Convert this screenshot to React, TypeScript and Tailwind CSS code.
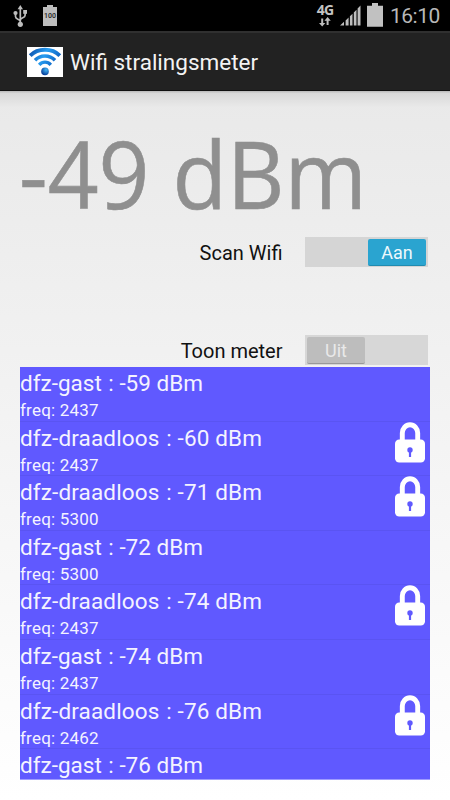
import React from "react";

type Network = { name: string; level: number; freq?: number; locked: boolean };

const networks: Network[] = [
  { name: "dfz-gast", level: -59, freq: 2437, locked: false },
  { name: "dfz-draadloos", level: -60, freq: 2437, locked: true },
  { name: "dfz-draadloos", level: -71, freq: 5300, locked: true },
  { name: "dfz-gast", level: -72, freq: 5300, locked: false },
  { name: "dfz-draadloos", level: -74, freq: 2437, locked: true },
  { name: "dfz-gast", level: -74, freq: 2437, locked: false },
  { name: "dfz-draadloos", level: -76, freq: 2462, locked: true },
  { name: "dfz-gast", level: -76, locked: false },
];

function UsbIcon() {
  return (
    <svg className="ml-[13px] mt-[1px] h-[23px] w-[15px]" viewBox="0 0 15 23" fill="none" stroke="#bdbdbd" strokeWidth="1.7">
      <path d="M7.3 3v17M7.3 16.6C6.8 13.8 2.5 14.6 2.5 11.5V8M7.3 15.2c.5-2.8 4.8-2 4.8-5V7" />
      <path d="M7.3 0l2.7 4.3H4.6z" fill="#bdbdbd" stroke="none" />
      <circle cx="7.3" cy="19.3" r="2.6" fill="#bdbdbd" stroke="none" />
      <circle cx="2.5" cy="8" r="2.1" fill="#bdbdbd" stroke="none" />
      <path d="M10.2 5h3.8v3.8h-3.8z" fill="#bdbdbd" stroke="none" />
    </svg>
  );
}

function StatusBar() {
  return (
    <div className="flex h-[31px] items-start bg-black pt-[4px]">
      <UsbIcon />
      <div className="ml-[15px] mt-[1px] flex w-[14px] flex-col items-center">
        <div className="h-[2px] w-[6px] bg-[#bdbdbd]" />
        <div className="flex h-[19px] w-[14px] items-center justify-center bg-[#bdbdbd] text-[7px] font-medium leading-none text-[#222]">
          100
        </div>
      </div>
      <div className="ml-auto flex w-[20px] flex-col items-center">
        <span className="font-['Open_Sans',sans-serif] text-[14px] font-bold leading-[12px] tracking-[-0.7px] text-[#c4c4c4]">4G</span>
        <svg className="mt-[1px] h-[10px] w-[12px]" viewBox="0 0 12 10" fill="#bdbdbd">
          <path d="M2.2 1.5h2V6h2.1L3.2 9.5 0 6h2.2zM7.6 8V3.8H5.4L8.6 0l3.2 3.8H9.6V8z" />
        </svg>
      </div>
      <svg className="ml-[5px] mt-[1px] h-[21px] w-[21px]" viewBox="0 0 21 21" fill="#bdbdbd">
        <path d="M0 20.5L4 16.7v3.8zM5.6 15.4l3-2.8v7.9h-3zM9.9 11.3l2.6-2.6v11.8H9.9zM13.8 7.4l2.7-2.7v15.8h-2.7zM17.6 3.5L20.5.6v19.9h-2.9z" />
      </svg>
      <svg className="-mt-px ml-[6px] h-[24px] w-[16px]" viewBox="0 0 16 24" fill="#c1c1c1">
        <path d="M5 0h6v2.7h5v21H0v-21h5z" />
      </svg>
      <span className="ml-[7px] w-[60px] whitespace-nowrap text-[21px] leading-[24px] tracking-[-0.5px] text-[#b8b8b8]">16:10</span>
    </div>
  );
}

function WifiLogo() {
  return (
    <svg className="h-[30px] w-[36px]" viewBox="0 0 36 30" fill="none">
      <defs>
        <linearGradient id="wave" x1="3" y1="2" x2="32" y2="20" gradientUnits="userSpaceOnUse">
          <stop offset="0" stopColor="#0b4fa9" />
          <stop offset=".45" stopColor="#269cf0" />
          <stop offset="1" stopColor="#0751b5" />
        </linearGradient>
        <radialGradient id="dot" cx=".65" cy=".3" r=".7">
          <stop offset="0" stopColor="#42b6f5" />
          <stop offset="1" stopColor="#063e9a" />
        </radialGradient>
      </defs>
      <path d="M0 0h36v30H0z" fill="#fff" />
      <g stroke="url(#wave)">
        <path d="M3.2 8.6C11 .8 25 .8 32.8 8.6" strokeWidth="3.9" />
        <path d="M8 13.2c5.6-5.6 14.4-5.6 20 0" strokeWidth="3.6" />
        <path d="M12.2 17.8c3.2-3.6 8.4-3.6 11.6 0" strokeWidth="3.3" />
      </g>
      <circle cx="18" cy="24.4" r="3.8" fill="url(#dot)" />
    </svg>
  );
}

function Lock() {
  return (
    <svg className="mr-[5px] h-[42px] w-[30px]" viewBox="0 0 30 42" fill="none">
      <path d="M7.3 20V11a7.7 8.2 0 0 1 15.4 0V20" stroke="#fff" strokeWidth="4.9" />
      <rect y="17.6" width="30" height="23" rx="4.2" fill="#fff" />
      <circle cx="15" cy="28" r="2.7" fill="#6059ff" />
      <path d="M13.9 28h2.2v7h-2.2z" fill="#6059ff" />
    </svg>
  );
}

export default function App() {
  return (
    <div className="flex h-[800px] w-[450px] flex-col overflow-hidden bg-white font-['Roboto',sans-serif]">
      <StatusBar />
      <header className="flex h-[60px] items-center border-b border-t-2 border-b-[#111] border-t-[#303030] bg-[#222] pl-[27px] pt-px">
        <WifiLogo />
        <h1 className="ml-[7px] whitespace-nowrap text-[22.5px] leading-[30px] text-[#f3f3f3]">Wifi stralingsmeter</h1>
      </header>
      <main className="flex flex-1 flex-col bg-linear-to-b from-[#e9e9e9] to-white px-[20px]">
        <div className="-mx-[20px] h-[16px] shrink-0 bg-linear-to-b from-[#b8b8b8] via-[#d9d9d9] via-15% to-[#e9e9e9]" />
        <div className="-ml-px mt-[4px] h-[125px] origin-left scale-x-[0.957] whitespace-nowrap font-['Open_Sans',sans-serif] text-[93px] leading-[125px] text-[#8f8f8f] [-webkit-text-stroke:0.6px_#8f8f8f]">-49 dBm</div>
        <div className="mt-px flex h-[30px] items-center justify-end pr-[2px]">
          <span className="mr-[22.5px] pt-[2px] text-[20px] text-[#111]">Scan Wifi</span>
          <div className="flex h-[30px] w-[123px] items-center justify-end bg-[#d5d5d5] pr-[2px]">
            <div className="flex h-[27px] w-[58px] items-center justify-center rounded-[2px] border-b border-[#208bb0] bg-[#2aa4d0] pt-[2px] text-[18px] text-[#eef8fc]">Aan</div>
          </div>
        </div>
        <div className="mt-[68px] flex h-[30px] items-center justify-end pr-[2px]">
          <span className="mr-[22.5px] pt-px text-[20px] text-[#111]">Toon meter</span>
          <div className="flex h-[30px] w-[123px] items-center bg-[#d7d7d7] pl-[2px]">
            <div className="flex h-[27px] w-[58px] items-center justify-center rounded-[2px] border-b border-[#999] bg-[#bdbdbd] pt-[2px] text-[18px] text-[#e9e9e9]">Uit</div>
          </div>
        </div>
        <ul className="mt-[2px] h-[413px] w-[410px] overflow-hidden border-b border-[#a09cff] bg-[#6059ff] text-[#f4f3ff]">
          {networks.map((n, i) => (
            <li key={i} className="flex h-[54.6px] items-start justify-between border-b border-[#5a54f2]">
              <div className="whitespace-nowrap">
                <div className={`h-[33px] text-[22.5px] leading-[33px] ${n.locked ? "tracking-[0.14px]" : "tracking-[0px]"}`}>
                  {n.name}<span className="ml-[1px]"> : </span>{n.level} dBm
                </div>
                {n.freq && <div className="text-[17px] leading-[20px] tracking-[0.2px]">freq: {n.freq}</div>}
              </div>
              {n.locked && <Lock />}
            </li>
          ))}
        </ul>
      </main>
    </div>
  );
}
